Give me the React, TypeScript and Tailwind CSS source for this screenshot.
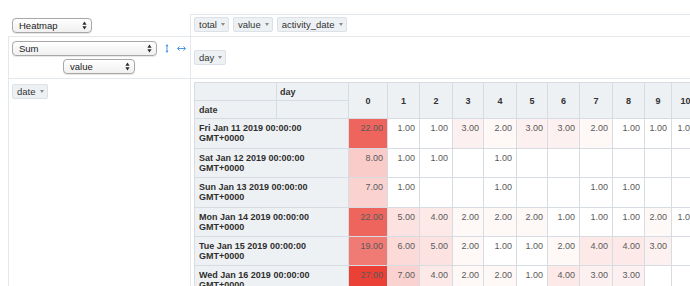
import React from "react";

type Row = { label: string; vals: (number | null)[]; h: string };

const rows: Row[] = [
  { label: "Fri Jan 11 2019 00:00:00 GMT+0000", vals: [22, 1, 1, 3, 2, 3, 3, 2, 1, 1, 1], h: "h-[30px]" },
  { label: "Sat Jan 12 2019 00:00:00 GMT+0000", vals: [8, 1, 1, null, 1, null, null, null, null, null, null], h: "h-[29px]" },
  { label: "Sun Jan 13 2019 00:00:00 GMT+0000", vals: [7, 1, null, null, 1, null, null, 1, 1, null, null], h: "h-[30px]" },
  { label: "Mon Jan 14 2019 00:00:00 GMT+0000", vals: [22, 5, 4, 2, 2, 2, 1, 1, 1, 2, 1], h: "h-[29px]" },
  { label: "Tue Jan 15 2019 00:00:00 GMT+0000", vals: [19, 6, 5, 2, 1, 1, 2, 4, 4, 3, null], h: "h-[29px]" },
  { label: "Wed Jan 16 2019 00:00:00 GMT+0000", vals: [27, 7, 4, 2, 2, 1, 4, 3, 3, null, null], h: "h-[30px]" },
];

const colKeys = ["0", "1", "2", "3", "4", "5", "6", "7", "8", "9", "10"];

function heat(v: number | null): string | undefined {
  if (v == null) return undefined;
  const t = (v - 1) / 26;
  return `rgb(${Math.round(255 - 21 * t)},${Math.round(255 - 191 * t)},${Math.round(255 - 201 * t)})`;
}

function Chevrons() {
  return (
    <svg width="5" height="9" viewBox="0 0 5 9" className="shrink-0">
      <path d="M0.4 3.7 L2.5 0.6 L4.6 3.7 Z" fill="#2a2a2a" />
      <path d="M0.4 5.3 L2.5 8.4 L4.6 5.3 Z" fill="#2a2a2a" />
    </svg>
  );
}

function FakeSelect({ label, w }: { label: string; w: string }) {
  return (
    <div
      className={`${w} h-[15px] flex items-center justify-between pl-[6px] pr-[4px] border border-[#a8a8a8] rounded-[4px] bg-linear-to-b from-white to-[#f0f0f0] text-[9.5px] text-[#222] leading-none shadow-[0_0.5px_1px_rgba(0,0,0,0.1)]`}
    >
      <span>{label}</span>
      <Chevrons />
    </div>
  );
}

function Pill({ label }: { label: string }) {
  return (
    <span className="inline-flex items-center h-[15px] pl-[4px] pr-[3px] gap-[4px] border border-[#dbe1e7] bg-[#eef1f4] rounded-[2px] text-[9.5px] text-[#333] leading-none whitespace-nowrap">
      {label}
      <span className="w-0 h-0 border-x-[2px] border-x-transparent border-t-[3px] border-t-[#8c8c8c]" />
    </span>
  );
}

function UpDown() {
  return (
    <svg width="4" height="9" viewBox="0 0 4 9" className="shrink-0">
      <path d="M2 0.5 V8.5" stroke="#3d8ee6" strokeWidth="0.9" />
      <path d="M0.4 2.3 L2 0.4 L3.6 2.3 Z" fill="#3d8ee6" />
      <path d="M0.4 6.7 L2 8.6 L3.6 6.7 Z" fill="#3d8ee6" />
    </svg>
  );
}

function LeftRight() {
  return (
    <svg width="9" height="5" viewBox="0 0 9 5" className="shrink-0">
      <path d="M0.8 2.5 H8.2" stroke="#3d8ee6" strokeWidth="0.9" />
      <path d="M0.4 2.5 L2.6 0.5 M0.4 2.5 L2.6 4.5" stroke="#3d8ee6" strokeWidth="0.9" fill="none" />
      <path d="M8.6 2.5 L6.4 0.5 M8.6 2.5 L6.4 4.5" stroke="#3d8ee6" strokeWidth="0.9" fill="none" />
    </svg>
  );
}

export default function App() {
  const cell = "border-r border-b border-[#d6dce2]";
  return (
    <div className="w-[690px] h-[286px] overflow-hidden bg-white font-['Liberation_Sans',Arial,sans-serif]">
      <div className="w-[720px] pt-[14px] pl-[8px]">
        <div className="grid grid-cols-[182px_minmax(0,1fr)] grid-rows-[23px_42px_auto]">
          {/* renderer */}
          <div className="border-b border-[#e3e8ed] pt-[4px] pl-[4px] flex items-start">
            <FakeSelect label="Heatmap" w="w-[80px]" />
          </div>
          {/* unused attrs */}
          <div className="border-l border-t border-b border-[#e3e8ed] pt-[2px] pl-[3px] flex items-start gap-[4px]">
            <Pill label="total" />
            <Pill label="value" />
            <Pill label="activity_date" />
          </div>
          {/* aggregator */}
          <div className="border-l border-b border-[#e3e8ed] pt-[4px] flex flex-col gap-[3px]">
            <div className="flex items-center pl-[3px]">
              <FakeSelect label="Sum" w="w-[145px]" />
              <span className="ml-[8px] flex items-center">
                <UpDown />
              </span>
              <span className="ml-[8px] flex items-center">
                <LeftRight />
              </span>
            </div>
            <div className="pl-[54px] flex">
              <FakeSelect label="value" w="w-[72px]" />
            </div>
          </div>
          {/* col attrs */}
          <div className="border-l border-b border-[#e3e8ed] pl-[3px] flex items-center">
            <Pill label="day" />
          </div>
          {/* row attrs */}
          <div className="border-l border-[#e3e8ed] pt-[5px] pl-[3px] min-h-[220px] flex items-start">
            <Pill label="date" />
          </div>
          {/* output */}
          <div className="border-l border-[#e3e8ed] pt-[3px] pl-[3px] min-w-0">
            <div className="w-max grid grid-cols-[82px_72px_39px_32px_33px_31px_33px_31px_32px_33px_32px_27px_28px_30px] border-l border-t border-[#d6dce2] text-[9px] leading-[10px] text-[#333]">
              <div className={`${cell} h-[18px] bg-[#eef1f4]`} />
              <div className={`${cell} h-[18px] bg-[#eef1f4] font-bold flex items-center pl-[3px]`}>day</div>
              {colKeys.map((k) => (
                <div key={k} className={`${cell} row-span-2 bg-[#eef1f4] font-bold flex items-center justify-center`}>
                  {k}
                </div>
              ))}
              <div className={`${cell} row-span-2 bg-[#eef1f4]`} />
              <div className={`${cell} h-[18px] bg-[#eef1f4] font-bold flex items-center pl-[4px]`}>date</div>
              <div className={`${cell} h-[18px] bg-[#eef1f4]`} />
              {rows.map((r) => (
                <React.Fragment key={r.label}>
                  <div className={`${cell} ${r.h} col-span-2 bg-[#eef1f4] font-bold text-[#2e2e2e] pl-[4px] pr-[4px] pt-[4px]`}>
                    {r.label}
                  </div>
                  {r.vals.map((v, i) => (
                    <div
                      key={i}
                      className={`${cell} ${r.h} text-right pr-[4px] pt-[4px] text-[#5a5a5a] whitespace-nowrap`}
                      style={{ backgroundColor: heat(v) }}
                    >
                      {v == null ? "" : v.toFixed(2)}
                    </div>
                  ))}
                  <div className={`${cell} ${r.h}`} />
                </React.Fragment>
              ))}
            </div>
          </div>
        </div>
      </div>
    </div>
  );
}
